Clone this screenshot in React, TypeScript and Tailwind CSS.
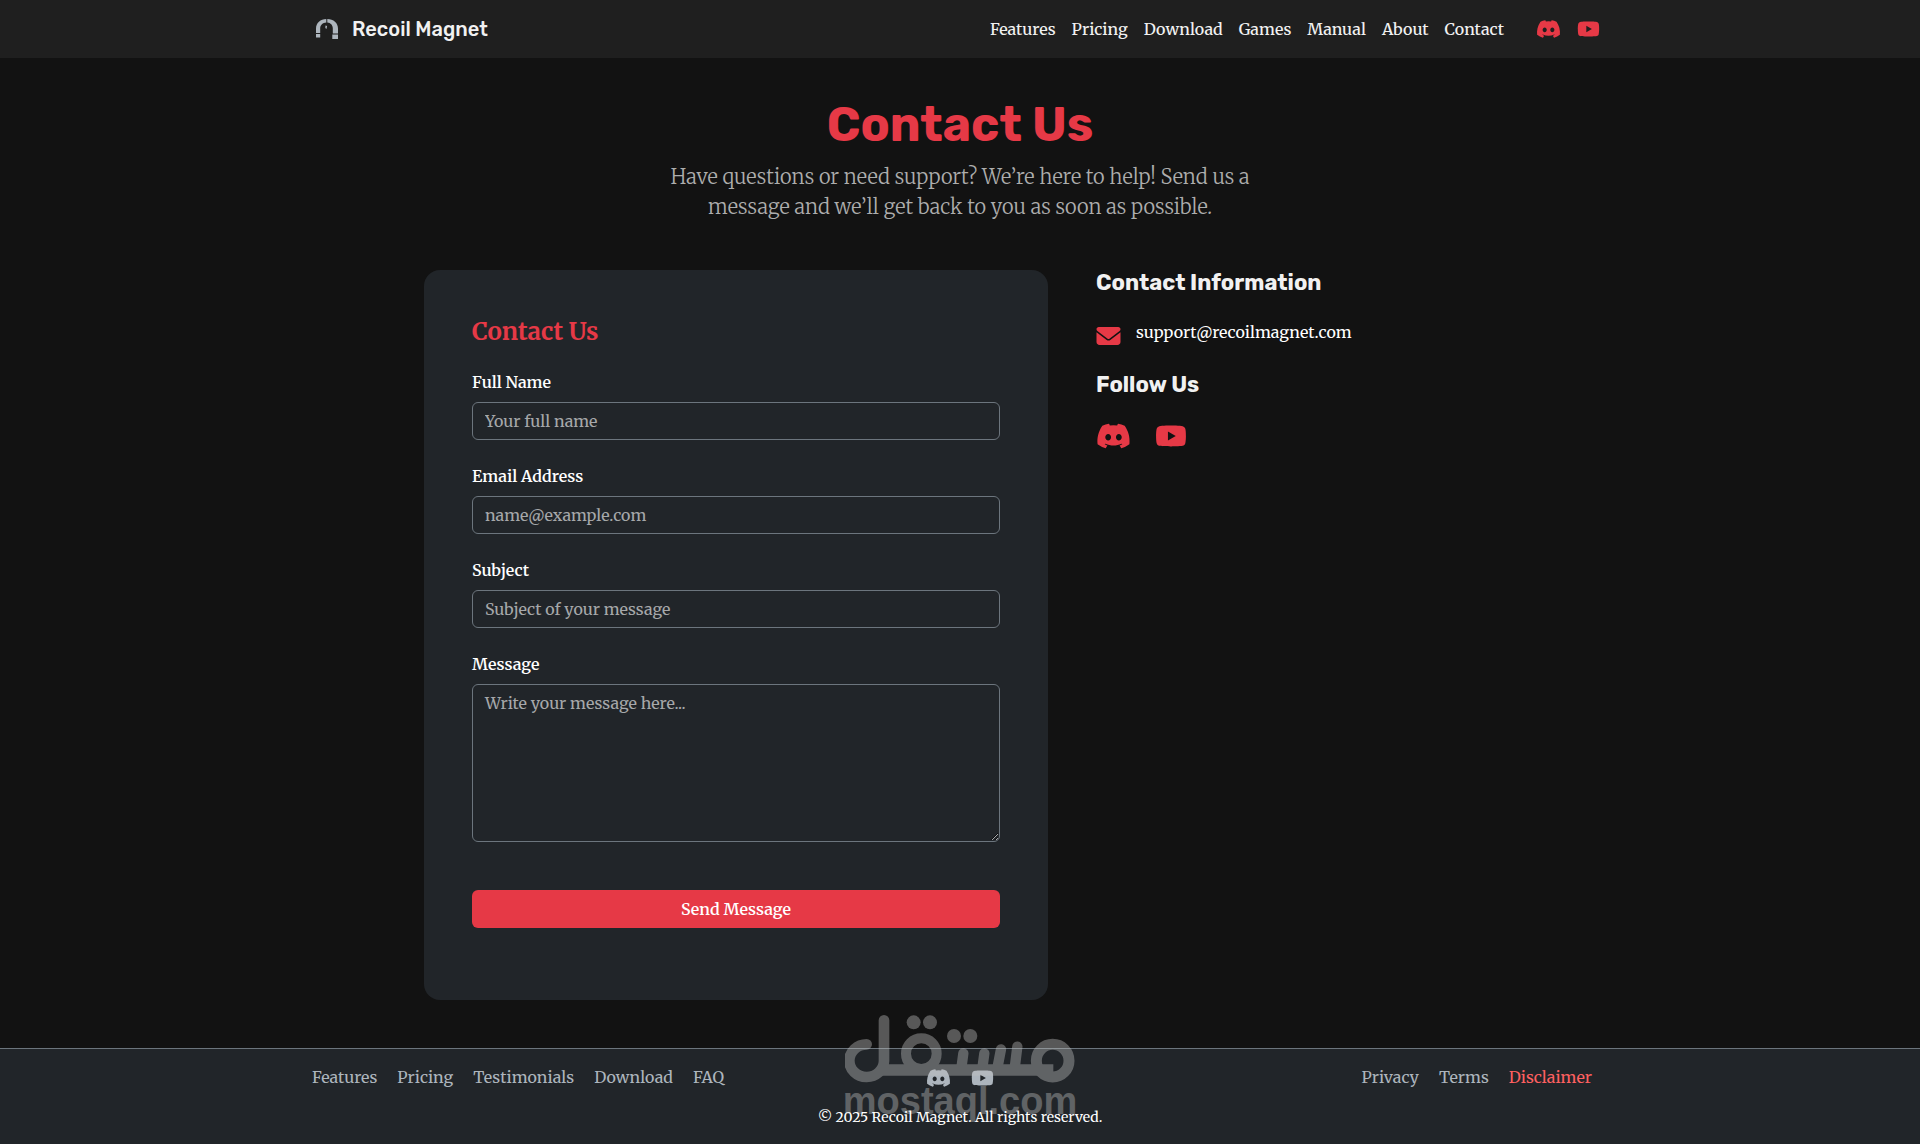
import { FaDiscord, FaEnvelope, FaYoutube } from "react-icons/fa6";

const navLinks = ["Features", "Pricing", "Download", "Games", "Manual", "About", "Contact"];
const footerLinks = ["Features", "Pricing", "Testimonials", "Download", "FAQ"];

const fields = [
  { id: "name", label: "Full Name", type: "text", placeholder: "Your full name" },
  { id: "email", label: "Email Address", type: "email", placeholder: "name@example.com" },
  { id: "subject", label: "Subject", type: "text", placeholder: "Subject of your message" },
];

const controlClass =
  "block w-full rounded-md border border-[#6c757d] bg-[#212529] px-3 py-1.5 text-base leading-6 text-white placeholder:text-[#a6a8aa] placeholder:opacity-100 focus:outline-none";

function MagnetLogo() {
  return (
    <svg viewBox="0 0 22 20" className="h-5 w-[22px]" aria-hidden="true">
      <path fill="#adb5bd" d="M0 14V9.500C0 4 4.500 0 10.300 0v3.600C6.800 3.800 4.200 6.200 4.200 9.500V14zM11.300 0C17.500 0 22 4 22 9.500v5h-5.200v-5c0-3.300-2.200-5.600-5.500-5.900zM0 15h4.200v3.500H0zM16.300 15.600H22V20h-5.700zM9.500 6.500l1.600.6-.6 2.800-1.200-1z" />
    </svg>
  );
}

function Watermark() {
  return (
    <div
      className="pointer-events-none absolute -top-[34px] left-1/2 w-[230px] -translate-x-1/2 text-[#c0c0c0] opacity-40"
      aria-hidden="true"
    >
      <svg viewBox="75 45 690 204" className="block w-full" fill="none" stroke="currentColor" strokeLinecap="round">
        <path strokeWidth="32" d="M192 61V183A52 49 0 1 1 140 133" />
        <path strokeWidth="34" strokeLinecap="butt" d="M180 210H700" />
        <circle cx="304" cy="161" r="46" strokeWidth="30" />
        <circle cx="698" cy="182" r="49" strokeWidth="33" />
        <path strokeWidth="31" d="M430 160l-6 45M493 160l-6 45M543 148l-11 57M592 140l-8 65" />
        <g fill="currentColor" stroke="none">
          <circle cx="281" cy="67" r="21" />
          <circle cx="330" cy="67" r="21" />
          <circle cx="402" cy="108" r="21" />
          <circle cx="451" cy="108" r="21" />
        </g>
      </svg>
      <div className="flex justify-center font-['Liberation_Sans',sans-serif] text-[38px] leading-9 font-bold whitespace-nowrap">mostaql.com</div>
    </div>
  );
}

export default function App() {
  return (
    <div className="flex min-h-screen flex-col bg-[#121212] font-['Merriweather','Noto_Serif',serif] text-base leading-6 text-white">
      <header className="bg-[#1f1f1f]">
        <div className="mx-auto flex h-[58px] max-w-[1320px] items-center justify-between pr-5 pl-4">
          <a href="#" className="flex items-center gap-3.5 font-['Rubik','Inter',sans-serif] text-xl font-medium text-[#f1f1f1]">
            <MagnetLogo />
            Recoil Magnet
          </a>
          <div className="flex items-center gap-8">
            <nav className="flex gap-4 font-medium text-[#f1f1f1]">
              {navLinks.map((link) => (
                <a key={link} href="#">{link}</a>
              ))}
            </nav>
            <div className="flex items-center gap-4 text-[#e63946]">
              <a href="#" aria-label="Discord"><FaDiscord className="h-5 w-[25px]" /></a>
              <a href="#" aria-label="YouTube"><FaYoutube className="h-5 w-[23px]" /></a>
            </div>
          </div>
        </div>
      </header>

      <main className="mx-auto w-full max-w-[1120px] flex-1 px-6 pt-[38px] pb-12">
        <div className="text-center">
          <h1 className="font-['Rubik','Inter',sans-serif] text-5xl leading-[58px] font-bold text-[#e63946]">Contact Us</h1>
          <p className="mx-auto mt-2 max-w-[600px] text-xl leading-[30px] font-light text-[#adadad]">
            Have questions or need support? We’re here to help! Send us a message and we’ll get back to you as soon as possible.
          </p>
        </div>

        <div className="mt-12 grid grid-cols-[39fr_25fr] gap-12">
          <form className="rounded-2xl bg-[#212529] p-12 pb-[72px]">
            <h2 className="mb-6 text-2xl leading-7 font-bold text-[#e63946]">Contact Us</h2>
            {fields.map((field) => (
              <div key={field.id} className="mb-6">
                <label htmlFor={field.id} className="mb-2 block font-semibold">{field.label}</label>
                <input id={field.id} type={field.type} placeholder={field.placeholder} className={controlClass} />
              </div>
            ))}
            <div className="mb-12">
              <label htmlFor="message" className="mb-2 block font-semibold">Message</label>
              <textarea id="message" rows={6} placeholder="Write your message here..." className={controlClass} />
            </div>
            <button type="button" className="block w-full rounded-md bg-[#e63946] px-3 py-[7px] font-semibold text-white">
              Send Message
            </button>
          </form>

          <section>
            <h3 className="font-['Rubik','Inter',sans-serif] text-[22px] leading-[26px] font-bold text-[#f1f1f1]">Contact Information</h3>
            <div className="mt-6 flex items-start gap-[15px]">
              <FaEnvelope className="mt-1 h-6 w-[25px] text-[#e63946]" />
              <a href="mailto:support@recoilmagnet.com">support@recoilmagnet.com</a>
            </div>
            <h3 className="mt-6 font-['Rubik','Inter',sans-serif] text-[22px] leading-[26px] font-bold text-[#f1f1f1]">Follow Us</h3>
            <div className="mt-6 flex gap-6 text-[#e63946]">
              <a href="#" aria-label="Discord"><FaDiscord className="h-7 w-[35px]" /></a>
              <a href="#" aria-label="YouTube"><FaYoutube className="h-7 w-8" /></a>
            </div>
          </section>
        </div>
      </main>

      <footer className="relative border-t border-[#6c757d] bg-[#212529] pt-4 pb-[15px] text-[#adb5bd]">
        <div className="mx-auto grid max-w-[1320px] grid-cols-[1fr_auto_1fr] items-center px-3">
          <nav className="flex gap-5">
            {footerLinks.map((link) => (
              <a key={link} href="#">{link}</a>
            ))}
          </nav>
          <div className="flex gap-5 pt-0.5">
            <a href="#" aria-label="Discord"><FaDiscord className="h-5 w-[25px]" /></a>
            <a href="#" aria-label="YouTube"><FaYoutube className="h-5 w-[23px]" /></a>
          </div>
          <nav className="mr-4 flex justify-end gap-5">
            <a href="#">Privacy</a>
            <a href="#">Terms</a>
            <a href="#" className="text-[#ff6060]">Disclaimer</a>
          </nav>
        </div>
        <Watermark />
        <p className="relative mt-4 text-center text-sm leading-6 text-white">© 2025 Recoil Magnet. All rights reserved.</p>
      </footer>
    </div>
  );
}
